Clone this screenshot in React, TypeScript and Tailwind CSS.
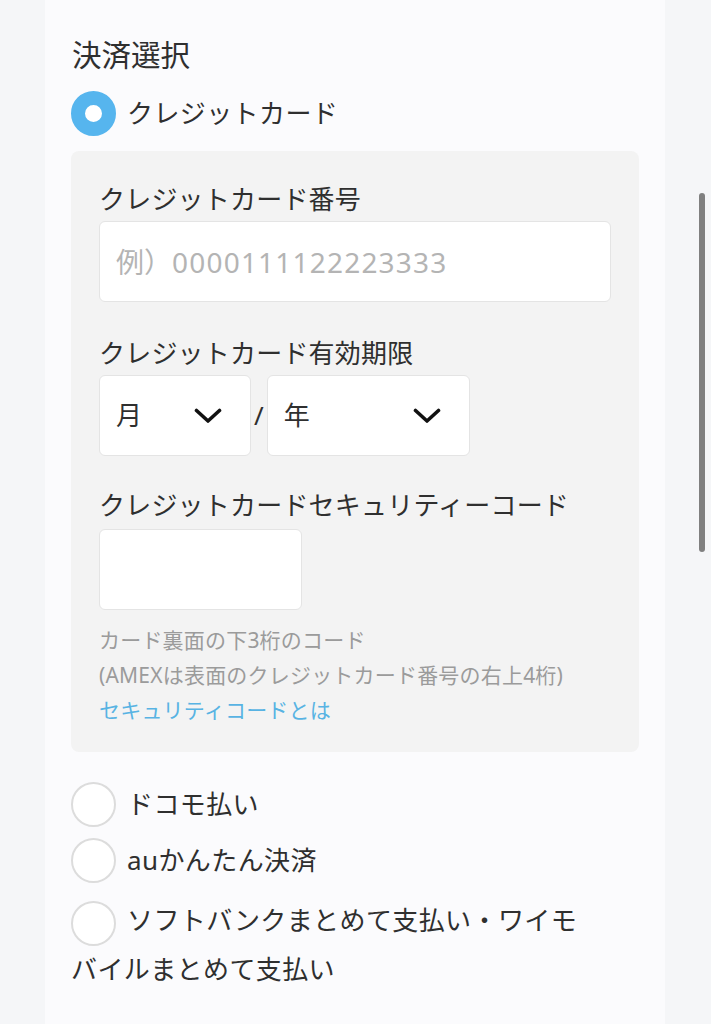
import React from "react";

const font = { fontFamily: '"Noto Sans", "Noto Sans CJK JP", sans-serif' };

function Chevron() {
  return (
    <svg width="28" height="16" viewBox="0 0 28 16" fill="none">
      <polyline
        points="2.5,2.5 14,13 25.5,2.5"
        stroke="#111"
        strokeWidth="3.6"
        strokeLinecap="round"
        strokeLinejoin="round"
      />
    </svg>
  );
}

function Radio({ checked }: { checked?: boolean }) {
  if (checked) {
    return <span className="inline-block h-[45px] w-[45px] shrink-0 rounded-full border-[14px] border-[#56b5ee] bg-white" />;
  }
  return <span className="inline-block h-[45px] w-[45px] shrink-0 rounded-full border-2 border-[#dcdcdc] bg-white" />;
}

export default function App() {
  return (
    <div className="relative h-[1024px] w-[711px] overflow-hidden bg-[#f5f6f8] text-[#2f2f2f]" style={font}>
      <div className="ml-[45px] h-full w-[620px] bg-[#fbfbfd] px-[26px] pt-[35px]">
        <h2 className="text-[29.5px] leading-[40px] pl-px">決済選択</h2>

        <div className="mt-[16px] flex h-[45px] items-center gap-[11px]">
          <Radio checked />
          <span className="text-[26px] tracking-[0.4px]">クレジットカード</span>
        </div>

        <div className="mt-[15px] rounded-[8px] bg-[#f3f3f3] px-[28px] pt-[30px] pb-[24px]">
          <p className="text-[26px] leading-[36px] tracking-[0.2px]">クレジットカード番号</p>
          <div className="mt-[4px] flex h-[81px] items-center rounded-[6px] border border-[#e4e4e4] bg-white pl-[16px]">
            <span className="text-[28px] text-[#b4b4b4]">
              例）<span className="tracking-[1.2px]">0000111122223333</span>
            </span>
          </div>

          <p className="mt-[33px] text-[26px] leading-[36px] tracking-[0.2px]">クレジットカード有効期限</p>
          <div className="mt-[4px] flex items-center">
            <div className="flex h-[81px] w-[152px] items-center justify-between rounded-[6px] border border-[#e4e4e4] bg-white pl-[16px] pr-[28px]">
              <span className="text-[26px]">月</span>
              <Chevron />
            </div>
            <span className="mx-[3px] text-[26px]">/</span>
            <div className="flex h-[81px] w-[203px] items-center justify-between rounded-[6px] border border-[#e4e4e4] bg-white pl-[16px] pr-[28px]">
              <span className="text-[26px]">年</span>
              <Chevron />
            </div>
          </div>

          <p className="mt-[31px] text-[26px] leading-[36px] tracking-[0.2px]">クレジットカードセキュリティーコード</p>
          <div className="mt-[6px] h-[81px] w-[203px] rounded-[6px] border border-[#e4e4e4] bg-white" />

          <div className="mt-[13px] text-[21px] leading-[35px] tracking-[0.2px] text-[#9b9b9b]">
            <p>カード裏面の下3桁のコード</p>
            <p>(AMEXは表面のクレジットカード番号の右上4桁)</p>
            <p className="text-[#58b3e3]">セキュリティコードとは</p>
          </div>
        </div>

        <div className="mt-[30px] flex h-[45px] items-center gap-[11px]">
          <Radio />
          <span className="text-[26px] tracking-[0.4px]">ドコモ払い</span>
        </div>
        <div className="mt-[11px] flex h-[45px] items-center gap-[11px]">
          <Radio />
          <span className="text-[26px] tracking-[0.4px]">auかんたん決済</span>
        </div>
        <p className="mt-[14px] w-[515px] text-[26px] leading-[46px] tracking-[0.4px]">
          <span className="mr-[11px] inline-block h-[45px] w-[45px] rounded-full border-2 border-[#dcdcdc] bg-white align-middle" />
          ソフトバンクまとめて支払い・ワイモバイルまとめて支払い
        </p>
      </div>

      <div className="absolute left-[699px] top-[193px] h-[359px] w-[6px] rounded-full bg-[#808080]" />
    </div>
  );
}
